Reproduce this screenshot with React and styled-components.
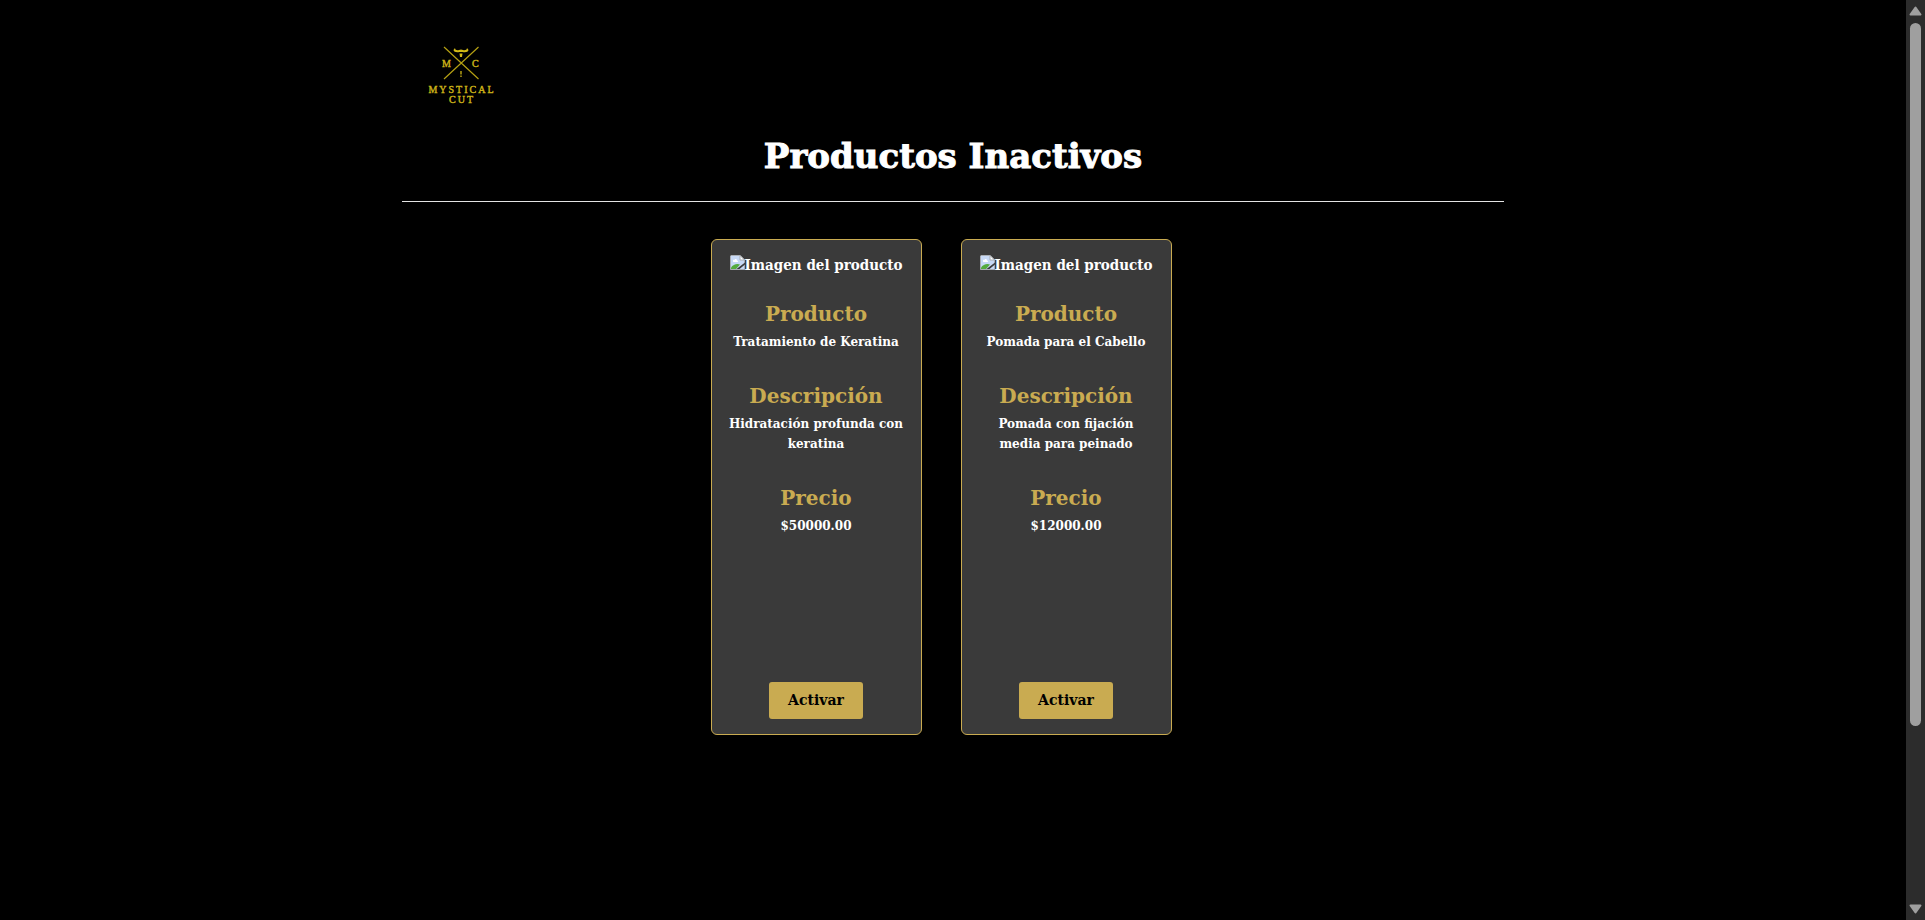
import React from "react";
import styled, { createGlobalStyle } from "styled-components";

const gold = "#c9ab51";

const GlobalStyle = createGlobalStyle`
  *, *::before, *::after { box-sizing: border-box; }
  body {
    margin: 0;
    background: #000;
    color: #fff;
    font-family: "DejaVu Serif", serif;
    font-weight: 700;
  }
  h1, h2, p { margin: 0; }
`;

const Page = styled.div`
  display: flex;
  min-height: 100vh;
`;

const Content = styled.main`
  flex: 1;
  padding: 30px 24px;
`;

const Container = styled.div`
  max-width: 1102px;
  margin: 0 auto;
`;

const HomeLink = styled.a`
  display: block;
  width: 120px;
  height: 90px;

  svg { display: block; }
`;

const Title = styled.h1`
  padding: 12px 0 21px;
  font-size: 34px;
  line-height: 48px;
  text-align: center;
  -webkit-text-stroke: 1px #fff;
`;

const Divider = styled.hr`
  height: 1px;
  margin: 0;
  border: 0;
  background: #e4e4e4;
`;

const ProductList = styled.div`
  display: flex;
  flex-wrap: wrap;
  justify-content: center;
  gap: 39px;
  padding: 37px 24px 0 0;
`;

const Card = styled.article`
  display: flex;
  flex-direction: column;
  align-items: center;
  width: 211px;
  min-height: 496px;
  padding: 15px 16px;
  border: 1px solid ${gold};
  border-radius: 6px;
  background: #3a3a3a;
  text-align: center;
`;

const MissingImage = styled.div`
  display: flex;
  height: 20px;
  margin-bottom: 24px;
  font-family: "DejaVu Serif Condensed", "DejaVu Serif", serif;
  font-size: 15px;
  line-height: 20px;
  white-space: nowrap;

  svg { flex: none; }
`;

const Field = styled.section`
  margin-bottom: 29px;
`;

const FieldTitle = styled.h2`
  margin-bottom: 3px;
  color: ${gold};
  font-size: 20px;
  line-height: 30px;
`;

const FieldText = styled.p`
  font-size: 12px;
  line-height: 20px;
`;

const ActivateButton = styled.button`
  height: 37px;
  margin-top: auto;
  padding: 0 19px 2px;
  border: 0;
  border-radius: 3px;
  background: ${gold};
  color: #000;
  font: inherit;
  font-size: 14px;
  cursor: pointer;
`;

const Scrollbar = styled.div`
  position: sticky;
  top: 0;
  display: flex;
  flex-direction: column;
  align-items: center;
  width: 19px;
  height: 100vh;
  padding: 6px 0;
  background: #2c2c2c;

  svg { flex: none; }
`;

const Track = styled.div`
  flex: 1;
  padding: 7px 0;
`;

const Thumb = styled.div`
  width: 11px;
  height: calc(80% + 4px);
  border-radius: 6px;
  background: #9f9f9f;
`;

function Logo() {
  return (
    <svg width="120" height="90" viewBox="0 0 120 90" role="img" aria-label="Mystical Cut">
      <g stroke="#b5a013" strokeWidth="1.2" fill="none">
        <path d="M42 17 L76.500 49 M76.500 17 L42 49" />
      </g>
      <path
        d="M53 18 C53 20 55 20.500 57 20 L59 19.500 L61 20 C63 20.500 65 20 65 18 L66.500 20 C66 22 64 22.500 60.500 22 H57.500 C54 22.500 52 22 51.500 20 Z M57.500 23.500 H60.500 L60 27 H58 Z"
        fill="#d4bb16"
      />
      <path d="M59 41 V44.500 M59 45.500 V47" stroke="#b5a013" strokeWidth="1.500" />
      <g fill="#cdb418" fontFamily='"Liberation Serif", serif' fontWeight="400" stroke="#cdb418" strokeWidth="0.4">
        <text x="40" y="37" fontSize="10">M</text>
        <text x="70" y="37" fontSize="10">C</text>
        <text x="60" y="63" fontSize="10" textAnchor="middle" letterSpacing="2">MYSTICAL</text>
        <text x="60" y="73" fontSize="10" textAnchor="middle" letterSpacing="2">CUT</text>
      </g>
    </svg>
  );
}

function BrokenImageIcon() {
  return (
    <svg width="15" height="15" viewBox="0 0 15 15" aria-hidden="true">
      <path d="M1 0.500 H10 L14.500 5 V14.500 H0.500 V1 Z" fill="#c6d8f5" stroke="#a9adb2" />
      <path d="M10 0.500 V5 H14.500 Z" fill="#fff" stroke="#a9adb2" />
      <path d="M3 6.500 C2.500 5 4 4.500 4.500 5 C5 3.500 7 4 7 5.500 C8.500 5.500 8.500 7 7.500 7 H3.500 Z" fill="#fff" />
      <path d="M1 14 V12.500 C3 9.500 7 8 10 9.500 L6 14 Z" fill="#54ab3d" />
      <path d="M15 7.500 V9.500 L9.500 14 H6.500 Z" fill="#3a3a3a" />
    </svg>
  );
}

const products = [
  { name: "Tratamiento de Keratina", description: "Hidratación profunda con keratina", price: "$50000.00" },
  { name: "Pomada para el Cabello", description: "Pomada con fijación media para peinado", price: "$12000.00" },
];

function ProductField({ title, children }) {
  return (
    <Field>
      <FieldTitle>{title}</FieldTitle>
      <FieldText>{children}</FieldText>
    </Field>
  );
}

function ProductCard({ product }) {
  return (
    <Card>
      <MissingImage>
        <BrokenImageIcon />
        <span>Imagen del producto</span>
      </MissingImage>
      <ProductField title="Producto">{product.name}</ProductField>
      <ProductField title="Descripción">{product.description}</ProductField>
      <ProductField title="Precio">{product.price}</ProductField>
      <ActivateButton type="button">Activar</ActivateButton>
    </Card>
  );
}

export default function App() {
  return (
    <Page>
      <GlobalStyle />
      <Content>
        <Container>
          <HomeLink href="#"><Logo /></HomeLink>
          <Title>Productos Inactivos</Title>
          <Divider />
          <ProductList>
            {products.map((product) => (
              <ProductCard key={product.name} product={product} />
            ))}
          </ProductList>
        </Container>
      </Content>
      <Scrollbar aria-hidden="true">
        <svg width="13" height="10" viewBox="0 0 13 10">
          <path d="M6.500 1.500 L11.500 8.500 H1.500 Z" fill="#9f9f9f" stroke="#9f9f9f" strokeWidth="2" strokeLinejoin="round" />
        </svg>
        <Track><Thumb /></Track>
        <svg width="13" height="10" viewBox="0 0 13 10">
          <path d="M6.500 8.500 L11.500 1.500 H1.500 Z" fill="#9f9f9f" stroke="#9f9f9f" strokeWidth="2" strokeLinejoin="round" />
        </svg>
      </Scrollbar>
    </Page>
  );
}
